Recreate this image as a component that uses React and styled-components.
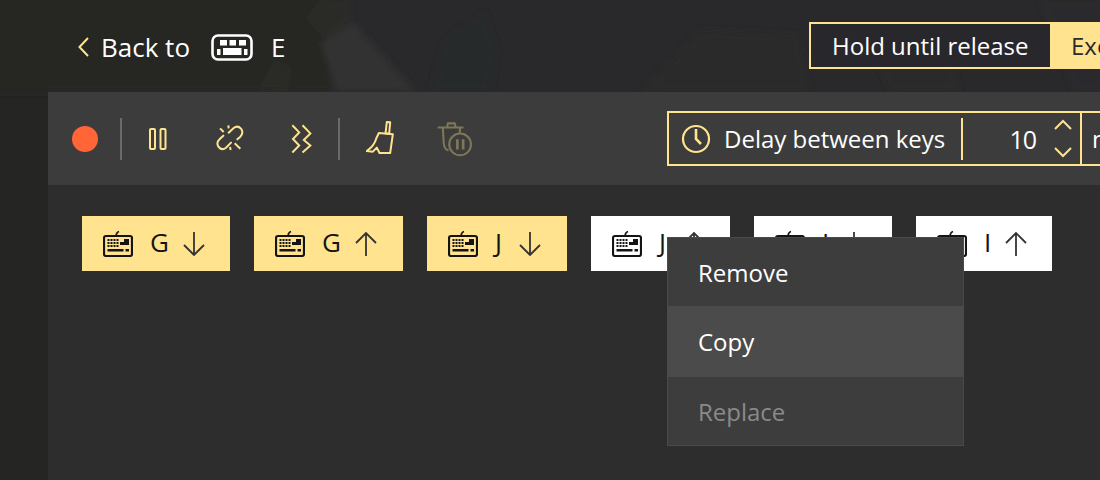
import React from "react";
import styled, { createGlobalStyle } from "styled-components";

const Y = "#ffe38f";

const Global = createGlobalStyle`
  html, body { margin: 0; padding: 0; background: #27272a; }
  body { font-family: "Open Sans", "Noto Sans", sans-serif; overflow: hidden; }
`;

const Page = styled.div`
  position: relative;
  width: 1100px;
  height: 480px;
  overflow: hidden;
  background: #29292c;
  color: #fff;
`;

const Backdrop = styled.svg`
  position: absolute;
  left: 0;
  top: 0;
`;

const Content = styled.div`
  position: relative;
  display: flex;
  flex-direction: column;
  height: 100%;
`;

const Header = styled.header`
  display: flex;
  align-items: flex-start;
  height: 92px;
  padding: 22px 0 0 78px;
  box-sizing: border-box;
`;

const BackLink = styled.div`
  flex: 0 0 731px;
  display: flex;
  align-items: center;
  height: 50px;
`;

const BackLabel = styled.span`
  font-size: 26px;
  margin-left: 12px;
  width: 110px;
  white-space: nowrap;
`;

const BoundKey = styled.span`
  font-size: 26px;
  margin-left: 18px;
`;

const Segmented = styled.div`
  flex: none;
  display: flex;
  height: 47px;
  border: 2px solid ${Y};
  box-sizing: border-box;
`;

const Segment = styled.div`
  display: flex;
  align-items: center;
  box-sizing: border-box;
  width: ${(p) => p.$w}px;
  padding-left: ${(p) => p.$pad}px;
  font-size: 24px;
  white-space: nowrap;
  background: ${(p) => (p.$active ? Y : "#28282c")};
  color: ${(p) => (p.$active ? "#2b2b2b" : "#fff")};
`;

const Panel = styled.main`
  flex: 1;
  margin-left: 48px;
  background: #2d2d2d;
  display: flex;
  flex-direction: column;
`;

const Toolbar = styled.div`
  display: flex;
  align-items: center;
  height: 93px;
  background: #3c3c3c;
  padding-left: 24px;
`;

const Record = styled.span`
  flex: none;
  width: 26px;
  height: 26px;
  border-radius: 50%;
  background: #ff6536;
`;

const Divider = styled.span`
  flex: none;
  width: 2px;
  height: 42px;
  background: #6a6a6a;
  margin-left: ${(p) => p.$ml}px;
`;

const ToolIcon = styled.svg`
  flex: none;
  margin-left: ${(p) => p.$ml}px;
`;

const DelayBox = styled.div`
  flex: none;
  display: flex;
  align-items: stretch;
  height: 55px;
  margin-left: ${(p) => p.$ml}px;
  border: 2px solid ${Y};
  box-sizing: border-box;
`;

const DelayLabel = styled.div`
  display: flex;
  align-items: center;
  width: 292px;
  box-sizing: border-box;
  padding-left: 12px;
  font-size: 24px;
  white-space: nowrap;
`;

const LabelText = styled.span`
  margin-left: 13px;
`;

const InnerRule = styled.span`
  flex: none;
  align-self: center;
  width: 2px;
  height: 42px;
  background: ${Y};
`;

const Stepper = styled.div`
  display: flex;
  align-items: center;
  justify-content: flex-end;
  width: 117px;
  box-sizing: border-box;
  padding-right: 7px;
  font-size: 25px;
  letter-spacing: -1px;
`;

const Arrows = styled.div`
  display: flex;
  flex-direction: column;
  gap: 17px;
  margin-left: 17px;
`;

const UnitCell = styled.div`
  border-left: 2px solid ${Y};
  padding-left: 10px;
  width: 60px;
  font-size: 24px;
  line-height: 51px;
`;

const KeyList = styled.div`
  display: flex;
  gap: 24px;
  padding: 31px 0 0 34px;
`;

const Chip = styled.div`
  flex: none;
  display: flex;
  align-items: center;
  box-sizing: border-box;
  width: ${(p) => p.$w}px;
  height: 55px;
  padding-left: 21px;
  background: ${(p) => (p.$recorded ? Y : "#fff")};
  color: #141414;
`;

const Letter = styled.span`
  flex: none;
  width: ${(p) => p.$w}px;
  margin-left: 17px;
  font-size: 26px;
  line-height: 1;
  margin-top: -3px;
`;

const Menu = styled.div`
  position: absolute;
  left: 667px;
  top: 237px;
  width: 297px;
  box-sizing: border-box;
  background: #3d3d3d;
  border: 1px solid #4a4a4a;
`;

const MenuItem = styled.div`
  display: flex;
  align-items: center;
  height: ${(p) => p.$h}px;
  padding-left: 30px;
  font-size: 24px;
  background: ${(p) => (p.$hover ? "#4b4b4b" : "transparent")};
  color: ${(p) => (p.$disabled ? "#8a8a8a" : "#fff")};
`;

const Chevron = ({ d, w = 20, h = 12, vb = "0 0 20 12" }) => (
  <svg width={w} height={h} viewBox={vb} fill="none" stroke={Y} strokeWidth="2">
    <path d={d} />
  </svg>
);

const HeaderKeyboard = () => (
  <svg width="42" height="27" viewBox="0 0 42 27" fill="#fff" style={{ flex: "none" }}>
    <rect x="1.5" y="1.5" width="39" height="24" rx="5.5" fill="none" stroke="#fff" strokeWidth="2.6" />
    <rect x="9" y="6" width="7" height="5.5" />
    <rect x="18.5" y="6" width="6.5" height="5.5" />
    <rect x="28" y="6" width="7" height="5.5" />
    <rect x="6" y="15" width="3.5" height="6" />
    <rect x="12" y="14" width="18.5" height="7" />
    <rect x="33" y="15" width="3.5" height="6" />
  </svg>
);

const ChipKeyboard = () => (
  <svg width="30" height="27" viewBox="0 0 30 27" fill="#141414" style={{ flex: "none" }}>
    <path d="M13 5 L13.8 3.3 Q14.3 2 16 1.5" fill="none" stroke="#141414" strokeWidth="1.8" />
    <rect x="1" y="6" width="28" height="20" rx="2" fill="none" stroke="#141414" strokeWidth="2.2" />
    {[0, 1, 2, 3].map((c) =>
      [0, 1, 2].map((r) => <rect key={`${c}${r}`} x={4.5 + c * 3} y={9 + r * 3} width="2" height="2" />)
    )}
    <path d="M17 15 V12 H21 V9 H26 V15 Z" />
    <rect x="4.5" y="19" width="16" height="2.5" />
    <rect x="22.5" y="19" width="3.5" height="2.5" />
  </svg>
);

const Arrow = ({ up }) => (
  <svg width="24" height="26" viewBox="0 0 24 26" fill="none" stroke="#333" strokeWidth="1.8" style={{ flex: "none", marginLeft: 14 }}>
    {up ? <path d="M12 25 V2 M2 12 L12 2 L22 12" /> : <path d="M12 1 V24 M2 14 L12 24 L22 14" />}
  </svg>
);

const chips = [
  { key: "G", w: 148, lw: 18, down: true, recorded: true },
  { key: "G", w: 149, lw: 18, down: false, recorded: true },
  { key: "J", w: 140, lw: 9, down: true, recorded: true },
  { key: "J", w: 139, lw: 9, down: false },
  { key: "I", w: 138, lw: 6, down: true },
  { key: "I", w: 136, lw: 6, down: false },
];

export default function App() {
  return (
    <Page>
      <Global />
      <Backdrop width="1100" height="480" viewBox="0 0 1100 480">
        <defs>
          <filter id="soft"><feGaussianBlur stdDeviation="3" /></filter>
        </defs>
        <rect x="0" y="0" width="48" height="480" fill="#252624" />
        <g filter="url(#soft)">
          <rect x="-10" y="-10" width="340" height="102" fill="#262724" />
          <path d="M320 43 L353 22 L416 92 L337 92 Z" fill="#313131" />
          <path d="M305 18 L320 0 L350 0 L352 20 L325 40 Z" fill="#292b26" />
          <path d="M258 90 L275 58 L292 68 L288 92 Z" fill="#292b25" />
          <path d="M430 92 L445 40 L485 12 L497 50 L490 92 Z" fill="#28292a" />
          <path d="M870 45 L905 25 L950 55 L960 92 L890 92 Z" fill="#2c2c29" />
          <path d="M640 92 L700 30 L800 35 L810 92 Z" fill="#2a2a2b" />
          <path d="M1040 0 L1110 0 L1110 92 L1075 92 Z" fill="#2c2c2e" />
        </g>
      </Backdrop>
      <Content>
        <Header>
          <BackLink>
            <Chevron w={11} h={20} vb="0 0 11 20" d="M10 1 L1.5 10 L10 19" />
            <BackLabel>Back to</BackLabel>
            <HeaderKeyboard />
            <BoundKey>E</BoundKey>
          </BackLink>
          <Segmented>
            <Segment $w={239} $pad={21}>Hold until release</Segment>
            <Segment $w={100} $pad={21} $active>Execute</Segment>
          </Segmented>
        </Header>
        <Panel>
          <Toolbar>
            <Record />
            <Divider $ml={22} />
            <ToolIcon $ml={26} width="20" height="24" viewBox="0 0 20 24" fill="none" stroke={Y} strokeWidth="2">
              <rect x="2" y="2" width="5" height="20" rx="1" />
              <rect x="12.5" y="2" width="5" height="20" rx="1" />
            </ToolIcon>
            <ToolIcon $ml={48} width="30" height="29" viewBox="50 44 90 87" fill="none" stroke={Y} strokeWidth="6">
              <path d="M88 70 L103 56 Q115 47 125 58 Q134 70 123 82 L114 90" strokeLinecap="round" />
              <path d="M95 100 L80 115 Q68 125 58 113 Q49 100 62 88 L72 79" strokeLinecap="round" />
              <path d="M62 57 L73 68 M87 48 L88 57 M106 102 L123 118 M92 113 L94 122" />
            </ToolIcon>
            <ToolIcon $ml={45} width="21" height="30" viewBox="275 40 64 90" fill="none" stroke={Y} strokeWidth="6">
              <path d="M279 43 L300 65 L281 85 L300 105 L279 126" />
              <path d="M310 43 L334 68 L314 88 L334 105 L310 126" />
            </ToolIcon>
            <Divider $ml={26} />
            <ToolIcon $ml={26} width="29" height="36" viewBox="50 32 86 108" fill="none" stroke={Y} strokeWidth="6" strokeLinejoin="round">
              <path d="M112 35 L122 36 L119 70 L108 69 Z" />
              <path d="M88 68 L130 72 L122 128 L90 128 L82 112 L70 124 L52 122 Q75 105 80 85 Z" />
            </ToolIcon>
            <ToolIcon $ml={42} width="36" height="36" viewBox="262 32 106 104" fill="none" stroke="#7f7759" strokeWidth="6">
              <path d="M264 50 H340 M292 49 L294 38 H314 L317 49" />
              <path d="M279 50 L282 98 Q284 115 296 118 M330 50 L329 66" />
              <circle cx="330" cy="100" r="32" />
              <path d="M322 85 V115 M339 85 V115" strokeWidth="8" />
            </ToolIcon>
            <DelayBox $ml={194}>
              <DelayLabel>
                <svg width="30" height="30" viewBox="0 0 30 30" fill="none" stroke={Y} strokeWidth="2.2" style={{ flex: "none" }}>
                  <circle cx="15" cy="15" r="13" />
                  <path d="M15 5 V15 L20 20" strokeWidth="2.6" />
                </svg>
                <LabelText>Delay between keys</LabelText>
              </DelayLabel>
              <InnerRule />
              <Stepper>
                <span>10</span>
                <Arrows>
                  <Chevron d="M2 10 L10 2 L18 10" w={20} h={11} vb="0 0 20 11" />
                  <Chevron d="M2 1 L10 9 L18 1" w={20} h={11} vb="0 0 20 11" />
                </Arrows>
              </Stepper>
              <UnitCell>ms</UnitCell>
            </DelayBox>
          </Toolbar>
          <KeyList>
            {chips.map((c, i) => (
              <Chip key={i} $w={c.w} $recorded={c.recorded}>
                <ChipKeyboard />
                <Letter $w={c.lw}>{c.key}</Letter>
                <Arrow up={!c.down} />
              </Chip>
            ))}
          </KeyList>
        </Panel>
        <Menu>
          <MenuItem $h={68}>Remove</MenuItem>
          <MenuItem $h={71} $hover>Copy</MenuItem>
          <MenuItem $h={68} $disabled>Replace</MenuItem>
        </Menu>
      </Content>
    </Page>
  );
}
